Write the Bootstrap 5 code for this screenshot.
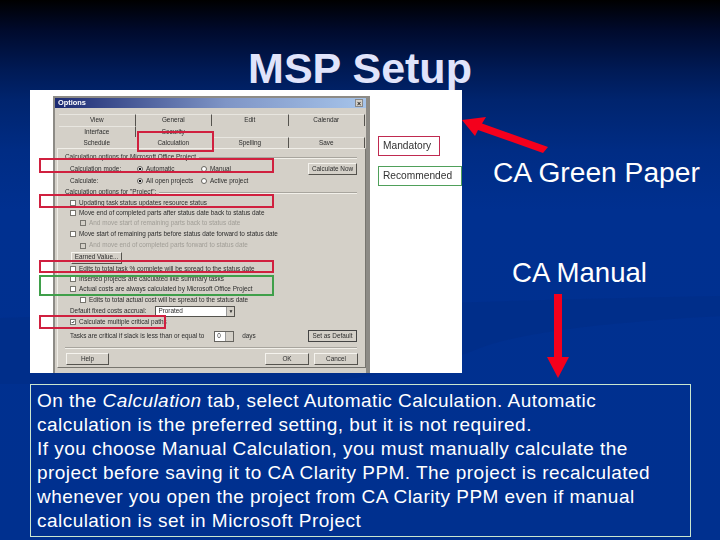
<!DOCTYPE html>
<html lang="en">
<head>
<meta charset="utf-8">
<title>MSP Setup</title>
<link href="https://cdn.jsdelivr.net/npm/bootstrap@5.3.0/dist/css/bootstrap.min.css" rel="stylesheet">
<style>
html,body{margin:0;background:#00308f}
.slide{position:relative;width:720px;height:540px;overflow:hidden;padding-top:43px;font-family:"Liberation Sans",Arial,sans-serif;color:#fff;background:linear-gradient(180deg,#000 0,#000a2c 30px,#001a55 70px,#00246e 100px,#002c84 150px,#003090 210px,#00308f 100%)}
.swoosh,.arrows{position:absolute;left:0;top:0;width:720px;height:540px;pointer-events:none}
.slide-title{position:relative;margin:0;height:47px;font:700 43px/50px "Liberation Sans",Arial,sans-serif;color:#e0e4fb;text-align:center}
.main-row{position:relative;height:283px}
.shot{position:relative;width:432px;height:283px;margin-left:30px;background:#fff;padding:6px 0 0 23px;flex:none}
.dlg{width:317px;height:277px;background:#d4d0c8;border:2px solid #8d8b86;border-right-width:4px;border-bottom:0;font-size:6.4px;line-height:1;color:#2c2c2c;filter:blur(.4px);display:flex;flex-direction:column}
.dlg-title{height:10px;background:linear-gradient(90deg,#1b2a72 0,#7f95c6 55%,#a6c4ea 100%);color:#fff;font-weight:700;font-size:7.4px;padding:0 3px;display:flex;align-items:center;justify-content:space-between;flex:none}
.dlg-x{width:8px;height:8px;background:#d4d0c8;color:#222;font-size:7px;display:flex;align-items:center;justify-content:center;border:1px solid #888}
.tabs{margin:6px 0 0 4px;width:306px;display:grid;grid-template-columns:repeat(4,76.5px);grid-template-rows:12px 11px 11px;flex:none}
.tabcell{display:flex;align-items:center;justify-content:center;border-right:1px solid #55534e;border-top:1px solid #e8e6e0}
.tab-plain{border-right-color:transparent;border-top-color:transparent}
.panel{margin-left:2px;width:309px;height:220px;border:1px solid #f0eee8;border-right:1px solid #77756f;border-bottom:1px solid #77756f;padding:3px 8px 0 7px;flex:none;display:flex;flex-direction:column}
.rows{display:grid;grid-template-rows:11px 12px 11.5px 11px 10.5px 10px 10.5px 11px 12px 12px 10.5px 10px 10.5px 11px 11px 11.5px 16px}
.rw{display:flex;align-items:center;white-space:nowrap;min-width:0}
.in1{padding-left:5px}
.in2{padding-left:15px}
.legend-line{flex:1;height:1px;background:#a8a59e;margin-left:3px;box-shadow:0 1px 0 #f2f0ea}
.muted-t{color:#a09d96}
.cb{width:6px;height:6px;background:#fff;border:1px solid #77756f;margin-right:3px;flex:none;display:flex}
.cb-off{background:#d4d0c8}
.cb svg{width:100%;height:100%}
.rd{width:6px;height:6px;border-radius:50%;background:#fff;border:1px solid #66645f;margin-right:3px;flex:none}
.rd-on{background:radial-gradient(circle,#111 0 1.4px,#fff 1.6px)}
.lab-a{width:67px;flex:none}
.lab-b{width:55px;flex:none}
.wbtn{height:12px;background:#d4d0c8;border:1px solid #f5f3ee;border-right-color:#55534e;border-bottom-color:#55534e;display:flex;align-items:center;justify-content:center;flex:none}
.w-49{width:49px;margin-left:auto}
.w-51{width:51px;margin-left:1px}
.w-def{outline:1px solid #444;outline-offset:-1px}
.w-43{width:43px}
.w-44{width:44px}
.sel{width:80px;height:11px;margin-left:9px;background:#fff;border:1px solid #55534e;padding-left:2px;display:flex;align-items:center;justify-content:space-between;flex:none}
.sel-b{width:8px;height:9px;background:#d4d0c8;border-left:1px solid #999;font-size:5px;display:flex;align-items:center;justify-content:center}
.spin{width:20px;height:11px;background:#fff;border:1px solid #66645f;margin:0 8px 0 10px;padding-left:2px;display:flex;align-items:center;justify-content:space-between;flex:none}
.spin-b{width:8px;height:9px;background:#d4d0c8;border-left:1px solid #999}
.dlg-sep{height:1px;background:#a8a59e;margin-top:3px;box-shadow:0 1px 0 #f2f0ea}
.dlg-foot{display:flex;margin:5px 0 0 1px;gap:5px}
.spacer{width:146px;flex:none}
.mark-box{position:absolute;border:2px solid #d0203f}
.g-box{border-color:#3f9f4a}
.mb1{left:107px;top:41px;width:77px;height:21px}
.mb2{left:9px;top:68px;width:235px;height:15px}
.mb3{left:9px;top:104px;width:235px;height:14px}
.mb4{left:9px;top:170px;width:235px;height:13px}
.mb5{left:9px;top:185px;width:235px;height:21px}
.mb6{left:9px;top:225px;width:127px;height:14px}
.legend-tag{position:absolute;left:348px;background:#fff;color:#333;font-size:10.2px;display:flex;align-items:center;padding-left:4px;filter:blur(.3px)}
.tag1{top:46px;width:62px;height:20px;border:1.5px solid #c02a50}
.tag2{top:76px;width:84px;height:20px;border:1.5px solid #4fa05a}
.side{flex:1;padding-top:66px}
.lbl1,.lbl2{line-height:32px;white-space:nowrap}
.lbl1{font-size:28.2px;margin-left:31px}
.lbl2{font-size:27.6px;margin:69px 0 0 50px}
.note{width:661px;height:153px;margin:11px 0 0 30px;border:1px solid #c9e6cf;padding:4px 6px 0;font-size:19px;letter-spacing:.46px;line-height:24px;white-space:nowrap;position:relative}
</style>
</head>
<body>
<div class="slide">
  <svg class="swoosh" viewBox="0 0 720 540"><path d="M0 318C200 312 480 300 720 296V316C620 322 520 330 470 352 420 372 340 380 300 384H0Z" fill="#002a82" opacity=".35"/></svg>
  <h1 class="slide-title">MSP Setup</h1>
  <div class="main-row d-flex">
    <div class="shot">
      <div class="dlg">
        <div class="dlg-title"><span>Options</span><span class="dlg-x">×</span></div>
        <div class="tabs">
          <div class="tabcell">View</div><div class="tabcell">General</div><div class="tabcell">Edit</div><div class="tabcell">Calendar</div>
          <div class="tabcell">Interface</div><div class="tabcell tab-plain">Security</div><div class="tabcell tab-plain"></div><div class="tabcell tab-plain"></div>
          <div class="tabcell tab-plain">Schedule</div><div class="tabcell tab-plain">Calculation</div><div class="tabcell">Spelling</div><div class="tabcell">Save</div>
        </div>
        <div class="panel">
          <div class="rows">
            <div class="rw"><span>Calculation options for Microsoft Office Project</span><span class="legend-line"></span></div>
            <div class="rw in1"><span class="lab-a">Calculation mode:</span><span class="rd rd-on"></span><span class="lab-b">Automatic</span><span class="rd"></span><span>Manual</span><span class="wbtn w-49">Calculate Now</span></div>
            <div class="rw in1"><span class="lab-a">Calculate:</span><span class="rd rd-on"></span><span class="lab-b">All open projects</span><span class="rd"></span><span>Active project</span></div>
            <div class="rw"><span>Calculation options for "Project":</span><span class="legend-line"></span></div>
            <div class="rw in1"><span class="cb"></span><span>Updating task status updates resource status</span></div>
            <div class="rw in1"><span class="cb"></span><span>Move end of completed parts after status date back to status date</span></div>
            <div class="rw in2"><span class="cb cb-off"></span><span class="muted-t">And move start of remaining parts back to status date</span></div>
            <div class="rw in1"><span class="cb"></span><span>Move start of remaining parts before status date forward to status date</span></div>
            <div class="rw in2"><span class="cb cb-off"></span><span class="muted-t">And move end of completed parts forward to status date</span></div>
            <div class="rw in1"><span class="wbtn w-51">Earned Value...</span></div>
            <div class="rw in1"><span class="cb"></span><span>Edits to total task % complete will be spread to the status date</span></div>
            <div class="rw in1"><span class="cb"></span><span>Inserted projects are calculated like summary tasks</span></div>
            <div class="rw in1"><span class="cb"></span><span>Actual costs are always calculated by Microsoft Office Project</span></div>
            <div class="rw in2"><span class="cb"></span><span>Edits to total actual cost will be spread to the status date</span></div>
            <div class="rw in1"><span>Default fixed costs accrual:</span><span class="sel"><span>Prorated</span><span class="sel-b">▼</span></span></div>
            <div class="rw in1"><span class="cb"><svg viewBox="0 0 6 6"><path d="M1 3l1.5 1.5L5 1.2" fill="none" stroke="#111" stroke-width="1.2"/></svg></span><span>Calculate multiple critical paths</span></div>
            <div class="rw in1"><span>Tasks are critical if slack is less than or equal to</span><span class="spin"><span>0</span><span class="spin-b"></span></span><span>days</span><span class="wbtn w-49 w-def">Set as Default</span></div>
          </div>
          <div class="dlg-sep"></div>
          <div class="dlg-foot"><span class="wbtn w-43">Help</span><span class="spacer"></span><span class="wbtn w-44">OK</span><span class="wbtn w-44">Cancel</span></div>
        </div>
      </div>
      <span class="mark-box mb1"></span>
      <span class="mark-box mb2"></span>
      <span class="mark-box mb3"></span>
      <span class="mark-box mb4"></span>
      <span class="mark-box g-box mb5"></span>
      <span class="mark-box mb6"></span>
      <span class="legend-tag tag1">Mandatory</span>
      <span class="legend-tag tag2">Recommended</span>
    </div>
    <div class="side">
      <div class="lbl1">CA Green Paper</div>
      <div class="lbl2">CA Manual</div>
    </div>
  </div>
  <div class="note">On the <em>Calculation</em> tab, select Automatic Calculation. Automatic<br>calculation is the preferred setting, but it is not required.<br>If you choose Manual Calculation, you must manually calculate the<br>project before saving it to CA Clarity PPM. The project is recalculated<br>whenever you open the project from CA Clarity PPM even if manual<br>calculation is set in Microsoft Project</div>
  <svg class="arrows" viewBox="0 0 720 540">
    <polygon points="462,120 486,117 482,123.5 548,147 543,153 478,130 475,136" fill="#f4001c"/>
    <polygon points="554,294 562,294 562,357 569,357 558,378 547,357 554,357" fill="#f4001c"/>
  </svg>
</div>
<script src="https://cdn.jsdelivr.net/npm/bootstrap@5.3.0/dist/js/bootstrap.bundle.min.js"></script>
</body>
</html>
